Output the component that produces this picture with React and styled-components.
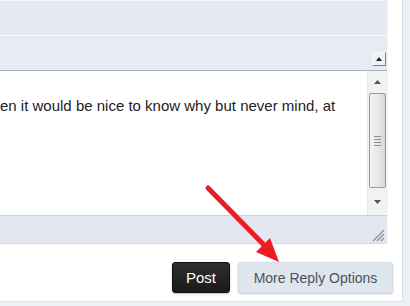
import styled, { createGlobalStyle } from "styled-components";

const Global = createGlobalStyle`
  html, body { margin: 0; padding: 0; }
  body {
    background: #edf1f6;
    font-family: "Liberation Sans", Arial, sans-serif;
    overflow: hidden;
  }
`;

const Page = styled.div`
  width: 410px;
  height: 306px;
  display: flex;
  align-items: flex-start;
  position: relative;
`;

const Box = styled.div`
  width: 403px;
  height: 302px;
  background: #fff;
  border-right: 1px solid #d9e0e9;
  border-bottom: 1px solid #d9e0e9;
  box-sizing: border-box;
  display: flex;
  flex-direction: column;
`;

const Editor = styled.div`
  width: 388px;
  display: flex;
  flex-direction: column;
  border-right: 1px solid #f4f6f9;
  box-sizing: border-box;
`;

const Bar = styled.div`
  height: ${(p) => p.h}px;
  background: ${(p) => p.bg};
  border-top: 1px solid ${(p) => p.top};
  display: flex;
  align-items: center;
  justify-content: flex-end;
  padding-right: 1px;
  box-sizing: border-box;
`;

const Toggle = styled.div`
  width: 14px;
  height: 14px;
  margin-top: 11px;
  box-sizing: border-box;
  border: 1px solid #f7f9fb;
  border-right-color: #7b8189;
  border-bottom-color: #7b8189;
  background: #eef1f5;
  display: flex;
  align-items: center;
  justify-content: center;
`;

const TextArea = styled.div`
  height: 146px;
  background: #fff;
  border-top: 1px solid #a7aeb8;
  border-bottom: 1px solid #c9d0da;
  box-sizing: border-box;
  display: flex;
`;

const Content = styled.div`
  flex: 1;
  padding-top: 26px;
  font-size: 15px;
  color: #222;
  white-space: nowrap;
  overflow: hidden;
`;

const Scroll = styled.div`
  width: 19px;
  background: #f2f2f2;
  border-left: 1px solid #e6e6e6;
  display: flex;
  flex-direction: column;
  align-items: center;
`;

const Arrow = styled.div`
  height: ${(p) => p.h}px;
  width: 100%;
  display: flex;
  align-items: center;
  justify-content: center;
`;

const Thumb = styled.div`
  width: 17px;
  height: 95px;
  box-sizing: border-box;
  border: 1px solid #979797;
  border-radius: 2px;
  background: linear-gradient(to right, #f4f4f4, #e6e6e6 60%, #d6d6d6);
  display: flex;
  align-items: center;
  justify-content: center;
`;

const Grip = styled.div`
  width: 7px;
  display: flex;
  flex-direction: column;
  gap: 2px;
  span {
    height: 1px;
    background: #8c8c8c;
  }
`;

const BottomBar = styled.div`
  height: 28px;
  background: #e3e8f0;
  border-bottom: 1px solid #d3dae3;
  box-sizing: border-box;
  display: flex;
  justify-content: flex-end;
  align-items: flex-end;
  padding: 0 2px 1px 0;
`;

const Actions = styled.div`
  display: flex;
  justify-content: flex-end;
  gap: 8px;
  padding: 18px 9px 0 0;
`;

const Button = styled.button`
  height: 31px;
  padding: 0;
  white-space: nowrap;
  font-family: "Liberation Sans", Arial, sans-serif;
  font-size: ${(p) => (p.dark ? 15 : 14)}px;
  border-radius: 3px;
  cursor: pointer;
  border: 1px solid ${(p) => (p.dark ? "#111" : "#d5dde6")};
  background: ${(p) =>
    p.dark ? "linear-gradient(#2e2e2e, #1a1a1a)" : "#dfe6ee"};
  color: ${(p) => (p.dark ? "#fff" : "#4a5262")};
  box-shadow: 0 1px 2px rgba(0, 0, 0, 0.25);
  width: ${(p) => p.w}px;
`;

const Overlay = styled.svg`
  position: absolute;
  left: 0;
  top: 0;
  pointer-events: none;
`;

export default function App() {
  return (
    <>
      <Global />
      <Page>
        <Box>
          <Editor>
            <Bar h={35} bg="#e5eaf2" top="#f2f5f9" />
            <Bar h={35} bg="#e7ecf3" top="#f7f9fc">
              <Toggle>
                <svg width="6" height="4" viewBox="0 0 6 4">
                  <path d="M0 4 L3 0 L6 4 Z" fill="#222" />
                </svg>
              </Toggle>
            </Bar>
            <TextArea>
              <Content>
                en it would be nice to know why but never mind, at
              </Content>
              <Scroll>
                <Arrow h={22}>
                  <svg width="7" height="4" viewBox="0 0 7 4">
                    <path d="M0 4 L3.5 0 L7 4 Z" fill="#555" />
                  </svg>
                </Arrow>
                <Thumb>
                  <Grip>
                    <span />
                    <span />
                    <span />
                    <span />
                  </Grip>
                </Thumb>
                <Arrow h={27}>
                  <svg width="7" height="4" viewBox="0 0 7 4">
                    <path d="M0 0 L3.5 4 L7 0 Z" fill="#555" />
                  </svg>
                </Arrow>
              </Scroll>
            </TextArea>
            <BottomBar>
              <svg width="14" height="14" viewBox="0 0 14 14">
                <path
                  d="M13 2 L2 13 M13 6 L6 13 M13 10 L10 13"
                  stroke="#8a8f96"
                  strokeWidth="1.3"
                />
              </svg>
            </BottomBar>
          </Editor>
          <Actions>
            <Button dark w={58}>Post</Button>
            <Button w={155}>More Reply Options</Button>
          </Actions>
        </Box>
        <Overlay width="410" height="306">
          <line
            x1="208"
            y1="188"
            x2="266"
            y2="247"
            stroke="#ec1c24"
            strokeWidth="5"
            strokeLinecap="round"
          />
          <path d="M279 262 L256 252 L270 238 Z" fill="#ec1c24" />
        </Overlay>
      </Page>
    </>
  );
}
